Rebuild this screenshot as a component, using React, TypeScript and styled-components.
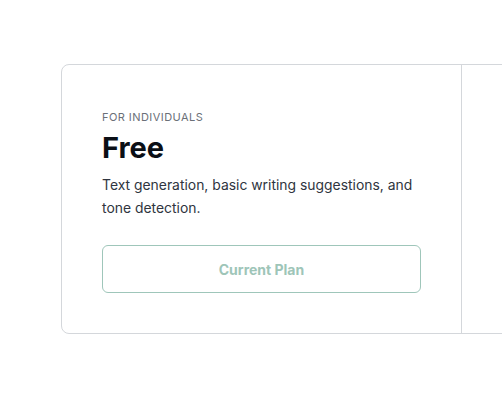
import React from "react";
import styled, { createGlobalStyle } from "styled-components";

const plan = {
  audience: "For individuals",
  name: "Free",
  desc: "Text generation, basic writing suggestions, and tone detection.",
  action: "Current Plan",
};

const GlobalStyle = createGlobalStyle`
  html, body {
    margin: 0;
    background: #ffffff;
    overflow: hidden;
  }
  body {
    font-family: Inter, "Liberation Sans", sans-serif;
  }
`;

function App() {
  return (
    <Page>
      <GlobalStyle />
      <PlanGrid>
        <PlanColumn>
          <Audience>{plan.audience}</Audience>
          <PlanName>{plan.name}</PlanName>
          <PlanDesc>{plan.desc}</PlanDesc>
          <PlanButton disabled>{plan.action}</PlanButton>
        </PlanColumn>
        {/* next plan starts past the right edge of the window */}
        <PlanColumn />
      </PlanGrid>
    </Page>
  );
}

export default App;

export const Page = styled.div`
  padding: 64px 0 0 61px;
  width: 1200px;
`;
export const PlanGrid = styled.div`
  display: grid;
  grid-template-columns: 399px 400px;
  border: 1px solid #d4d7db;
  border-radius: 8px;
  width: fit-content;
`;
export const PlanColumn = styled.div`
  display: flex;
  flex-direction: column;
  padding: 44px 40px 40px 40px;

  & + & {
    border-left: 1px solid #d4d7db;
  }
`;
export const Audience = styled.div`
  font-size: 11px;
  line-height: 16px;
  letter-spacing: 0.04em;
  text-transform: uppercase;
  color: #6b7078;
`;
export const PlanName = styled.h2`
  margin: 5px 0 0;
  font-size: 29px;
  line-height: 36px;
  font-weight: 700;
  color: #0b0f16;
`;
export const PlanDesc = styled.p`
  margin: 8px 0 0;
  font-size: 13.9px;
  line-height: 23px;
  color: #2f3540;
`;
export const PlanButton = styled.button`
  margin-top: 25px;
  height: 48px;
  width: 319px;
  border-radius: 6px;
  background: #ffffff;
  border: 1px solid #9fc6ba;
  color: #9ec5b8;
  font-family: inherit;
  font-size: 14px;
  font-weight: 700;
  cursor: default;
`;
